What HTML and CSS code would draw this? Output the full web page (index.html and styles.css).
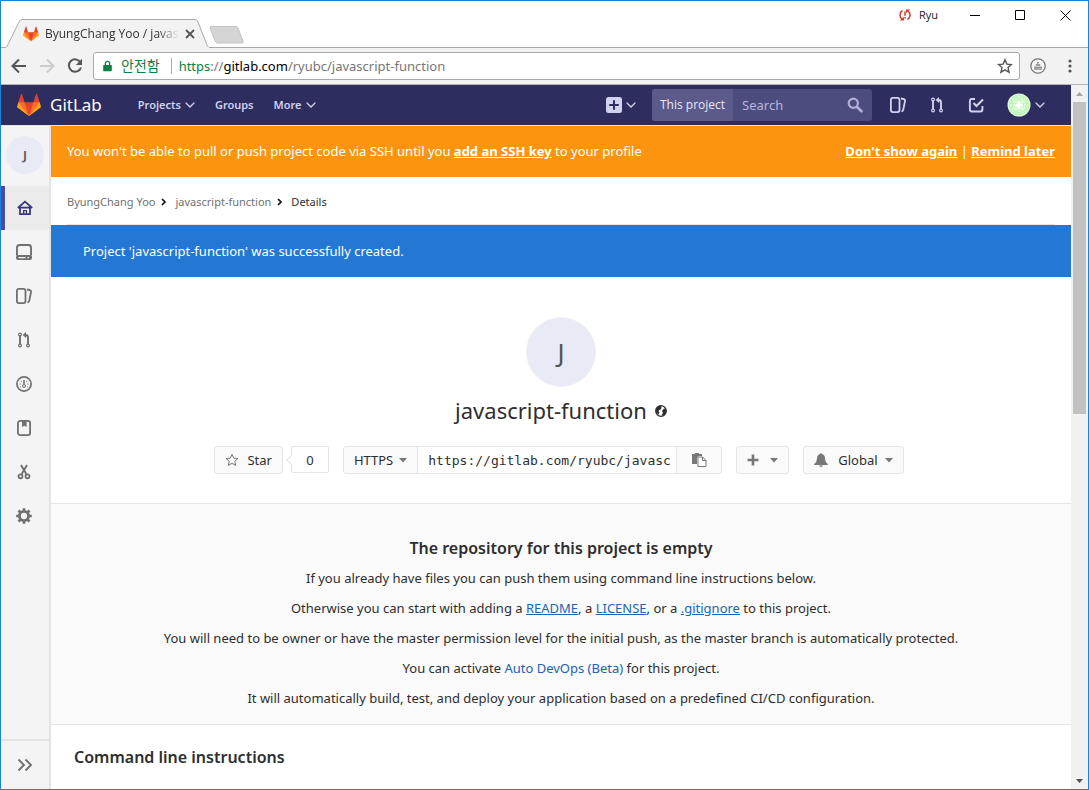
FILE: index.html
```html
<!DOCTYPE html>
<html lang="en">
<head>
<meta charset="utf-8">
<title>ByungChang Yoo / javascript-function</title>
<link rel="stylesheet" href="styles.css">
</head>
<body>
<svg class="defs" aria-hidden="true">
  <symbol id="fox" viewBox="0 0 36 36">
    <path fill="#e24329" d="M2 14l9.38 9v-9l-4-12.28c-.205-.632-1.176-.632-1.38 0z"/>
    <path fill="#e24329" d="M34 14l-9.38 9v-9l4-12.28c.205-.632 1.176-.632 1.38 0z"/>
    <path fill="#e24329" d="M18 34.38L3 14h30z"/>
    <path fill="#fc6d26" d="M18 34.38L11.38 14H2l4 11z"/>
    <path fill="#fc6d26" d="M18 34.38L24.62 14H34l-4 11z"/>
    <path fill="#fca326" d="M2 14L.1 20.16c-.18.565 0 1.2.5 1.56L18 34.38z"/>
    <path fill="#fca326" d="M34 14l1.9 6.16c.18.565 0 1.2-.5 1.56L18 34.38z"/>
  </symbol>
  <symbol id="chevron" viewBox="0 0 10 10"><path d="M1 3l4 4 4-4" fill="none" stroke="currentColor" stroke-width="1.3" stroke-linecap="round"/></symbol>
  <symbol id="caret" viewBox="0 0 8 5"><path d="M0 0h8L4 4.600z" fill="currentColor"/></symbol>
  <symbol id="issues" viewBox="0 0 16 16"><g fill="none" stroke="currentColor" stroke-width="1.8"><rect x=".9" y=".9" width="8.600" height="14.200" rx="2"/><path d="M11 1.500l2.600.5c1 .2 1.600 1 1.400 2l-1.700 8.700c-.2 1-.8 1.500-1.800 1.600"/></g></symbol>
  <symbol id="merge" viewBox="0 0 16 16"><g fill="none" stroke="currentColor"><g stroke-width="1.200"><circle cx="4" cy="2.500" r="1.400"/><circle cx="4" cy="13.500" r="1.400"/><circle cx="12" cy="13.500" r="1.400"/></g><path d="M4 4v8M12 12V5.500Q12 3 9.500 3H9" stroke-width="1.900"/></g><path d="M10 0v6L6.600 3z" fill="currentColor"/></symbol>
  <symbol id="next" viewBox="0 0 6 8"><path d="M1 1l3 3-3 3" fill="none" stroke="#111" stroke-width="1.700"/></symbol>
</svg>

<div class="window">
  <header class="titlebar">
    <div class="tab">
      <svg class="tab-shape" viewBox="0 0 208 29" preserveAspectRatio="none" aria-hidden="true"><path d="M0 28.500H5.500L18 3Q19.500.5 21 .5H194Q196 .5 197 3L206 26Q207 28.500 208 28.500" fill="#f2f2f2" stroke="#a9a9a9"/><path d="M5 28.500H208" stroke="#f2f2f2"/></svg>
      <svg class="tab-icon"><use href="#fox"/></svg>
      <span class="tab-title">ByungChang Yoo / javascript</span>
      <button class="plain tab-close" aria-label="Close tab"><svg viewBox="0 0 10 10"><path d="M1 1l8 8M9 1L1 9" stroke="#555" stroke-width="1.800"/></svg></button>
    </div>
    <button class="plain new-tab" aria-label="New tab"><svg viewBox="0 0 36 18"><path d="M2 .5H27Q28.500.5 29 2L34 15Q35 17 33 17H9Q7 17 6 15L1 2Q.5.500 2 .5z" fill="#d5d5d5" stroke="#c4c4c4"/></svg></button>
    <div class="window-tools">
      <svg class="sync" viewBox="0 0 12 12"><g fill="none" stroke="#d23f31" stroke-width="1.500"><path d="M3.500 1.500Q1 3 1 6q0 2.500 2 4M8.500 10.500q2.500-1.500 2.500-4.500 0-2.500-2-4"/><path d="M6 2.500v4.300M6 8v1.500"/></g><path d="M.8 11.500H5V7.800zM11.200.5H7v3.700z" fill="#d23f31"/></svg>
      <span class="user">Ryu</span>
      <button class="plain control" aria-label="Minimize"><svg viewBox="0 0 11 11"><path d="M0 5.500h10" stroke="#000"/></svg></button>
      <button class="plain control" aria-label="Maximize"><svg viewBox="0 0 11 11"><path d="M.5.5h9v9h-9z" fill="none" stroke="#000"/></svg></button>
      <button class="plain control" aria-label="Close"><svg viewBox="0 0 11 11"><path d="M.5.5l10 10M10.500.5l-10 10" stroke="#000"/></svg></button>
    </div>
  </header>

  <div class="toolbar">
    <button class="plain tool" aria-label="Back"><svg viewBox="0 0 16 16"><path d="M15 8H2M8 1.500L1.500 8 8 14.500" fill="none" stroke="#555" stroke-width="2"/></svg></button>
    <button class="plain tool" aria-label="Forward" disabled><svg viewBox="0 0 16 16"><path d="M1 8h13M8 1.500L14.500 8 8 14.500" fill="none" stroke="#ccc" stroke-width="2"/></svg></button>
    <button class="plain tool" aria-label="Reload"><svg viewBox="0 0 16 16"><path d="M13.500 4.500A6.200 6.200 0 1 0 14 9.500" fill="none" stroke="#555" stroke-width="2"/><path d="M15 .8V7H8.800z" fill="#555"/></svg></button>
    <div class="address">
      <svg class="lock" viewBox="0 0 10 12"><path d="M1 5h8q.8 0 .8.800V11q0 .8-.8.800H1q-.8 0-.8-.8V5.800Q.2 5 1 5z" fill="#0b8043"/><path d="M2.600 5.500V3.200a2.400 2.400 0 0 1 4.800 0v2.300" fill="none" stroke="#0b8043" stroke-width="1.400"/></svg>
      <span class="secure">안전함</span>
      <span class="url"><span class="scheme">https</span>://<b>gitlab.com</b>/ryubc/javascript-function</span>
      <button class="plain bookmark" aria-label="Bookmark"><svg viewBox="0 0 16 16"><path d="M8 1.800l1.900 4.300 4.600.4-3.500 3.100 1.100 4.600L8 11.800l-4.100 2.400L5 9.600 1.500 6.500l4.600-.4z" fill="none" stroke="#555" stroke-width="1.400"/></svg></button>
    </div>
    <button class="plain ext" aria-label="Extension"><svg viewBox="0 0 16 16"><circle cx="8" cy="8" r="7.200" fill="#f5f5f5" stroke="#777" stroke-width="1.300"/><path d="M4 8.500h8V12H4zM6 6h4v2H6zM7 4h1.500v2H7z" fill="#aaa"/><path d="M4 9.500h8M5.500 7h5M7 5l2-1" stroke="#888" stroke-width=".7"/></svg></button>
    <button class="plain menu" aria-label="Menu"><svg viewBox="0 0 4 14"><circle cx="2" cy="2" r="1.600"/><circle cx="2" cy="7" r="1.600"/><circle cx="2" cy="12" r="1.600"/></svg></button>
  </div>

  <div class="viewport">
    <div class="page">
      <nav class="navbar">
        <a class="brand" href="#"><svg><use href="#fox"/></svg>GitLab</a>
        <a class="nav-link" href="#">Projects <svg><use href="#chevron"/></svg></a>
        <a class="nav-link" href="#">Groups</a>
        <a class="nav-link" href="#">More <svg><use href="#chevron"/></svg></a>
        <button class="plain nav-new" aria-label="New"><svg viewBox="0 0 16 16"><rect width="16" height="16" rx="2.500" fill="#d1d1f0"/><path d="M8 3.200v9.600M3.200 8h9.600" stroke="#2e2d5f" stroke-width="2"/></svg><svg class="chev"><use href="#chevron"/></svg></button>
        <form class="search">
          <label for="search">This project</label>
          <input id="search" type="text" placeholder="Search">
          <svg viewBox="0 0 16 16"><circle cx="6.300" cy="6.300" r="4.600" fill="none" stroke="#afafd8" stroke-width="2.200"/><path d="M10 10l4.500 4.300" stroke="#afafd8" stroke-width="2.600" stroke-linecap="round"/></svg>
        </form>
        <div class="nav-icons">
          <a href="#" aria-label="Issues"><svg><use href="#issues"/></svg></a>
          <a href="#" aria-label="Merge requests"><svg><use href="#merge"/></svg></a>
          <a href="#" aria-label="Todos"><svg viewBox="0 0 16 16"><path d="M7 2H3.500Q1.900 2 1.900 4v8.500q0 2 2 2h8.500q2 0 2-2V9" fill="none" stroke="currentColor" stroke-width="1.900"/><path d="M5.500 6l3 3L15 2.500" fill="none" stroke="currentColor" stroke-width="2.100"/></svg></a>
        </div>
        <button class="plain nav-user" aria-label="User menu"><svg class="face" viewBox="0 0 24 24"><circle cx="12" cy="12" r="11.500" fill="#e4fbe0"/><circle cx="12" cy="12" r="10.500" fill="#c4f5bd"/><path d="M12 3v18M3 12h18M5.500 5.500l13 13M18.500 5.500l-13 13M6 9h12M6 15h12M9 5v14M15 5v14" stroke="#eafde6" stroke-width="1.300" stroke-dasharray="2 1.500"/><path d="M12 8.500v7M8.500 12h7" stroke="#fff" stroke-width="2"/></svg><svg class="chev"><use href="#chevron"/></svg></button>
      </nav>

      <div class="body">
        <aside class="sidebar">
          <a class="side-avatar" href="#">J</a>
          <a class="side active" href="#" aria-label="Overview"><svg viewBox="0 0 16 16"><g fill="none" stroke="currentColor"><path d="M.8 8L8 1.600 15.200 8M3 7.600v6.600h10V7.600M2 7.700h12" stroke-width="1.800"/><path d="M6.600 14v-3.400h2.800V14" stroke-width="1.300"/></g></svg></a>
          <a class="side" href="#" aria-label="Repository"><svg viewBox="0 0 16 16"><path d="M1 11.500V3.500Q1 1 3.500 1h9Q15 1 15 3.500v8" fill="none" stroke="currentColor" stroke-width="1.900"/><path fill-rule="evenodd" d="M2 11h12q2 0 2 2v1q0 2-2 2H2q-2 0-2-2v-1q0-2 2-2zm.5 2v1.200h7V13zm9 0v1.200H13V13z" fill="currentColor"/></svg></a>
          <a class="side" href="#" aria-label="Issues"><svg><use href="#issues"/></svg></a>
          <a class="side" href="#" aria-label="Merge requests"><svg><use href="#merge"/></svg></a>
          <a class="side" href="#" aria-label="CI / CD"><svg viewBox="0 0 16 16"><g fill="none" stroke="currentColor"><circle cx="8" cy="8" r="7.100" stroke-width="1.700"/><circle cx="8" cy="10" r="1.500"/><path d="M8 4v4.500" stroke-width="1.600"/><path d="M3.500 8h1.300M11.200 8h1.300M4.900 4.900l.8.800M11.100 4.900l-.8.800M4.200 11l.9-.5M11.800 11l-.9-.5"/></g></svg></a>
          <a class="side" href="#" aria-label="Wiki"><svg viewBox="0 0 16 16"><rect x="1.900" y=".9" width="12.200" height="14.200" rx="2.400" fill="none" stroke="currentColor" stroke-width="1.800"/><path d="M6 1h4.600v6L8.300 5.800 6 7z" fill="currentColor"/></svg></a>
          <a class="side" href="#" aria-label="Snippets"><svg viewBox="0 0 16 16"><g fill="none" stroke="currentColor"><path d="M5 1l5.300 9M11 1L5.700 10" stroke-width="1.900"/><circle cx="4.500" cy="12.300" r="2" stroke-width="1.700"/><circle cx="11.500" cy="12.300" r="2" stroke-width="1.700"/></g></svg></a>
          <a class="side" href="#" aria-label="Settings"><svg viewBox="0 0 16 16"><circle cx="8" cy="8" r="4.600" fill="none" stroke="currentColor" stroke-width="2.900"/><path d="M8 .2v3M8 12.800v3M.2 8h3M12.800 8h3M2.500 2.500l2 2M11.500 11.500l2 2M2.500 13.500l2-2M11.500 4.500l2-2" stroke="currentColor" stroke-width="2.600"/></svg></a>
          <button class="plain expand" aria-label="Expand sidebar"><svg viewBox="0 0 16 16"><path d="M1.500 2.500L7 8l-5.500 5.500M8.500 2.500L14 8l-5.500 5.500" fill="none" stroke="currentColor" stroke-width="1.900"/></svg></button>
        </aside>

        <main class="content">
          <div class="ssh-alert">
            <span>You won't be able to pull or push project code via SSH until you <a href="#">add an SSH key</a> to your profile</span>
            <span><a href="#">Don't show again</a> | <a href="#">Remind later</a></span>
          </div>
          <div class="crumbs">
            <a href="#">ByungChang Yoo</a><svg><use href="#next"/></svg><a href="#">javascript-function</a><svg><use href="#next"/></svg><span>Details</span>
          </div>
          <div class="flash">Project 'javascript-function' was successfully created.</div>

          <section class="project">
            <div class="avatar">J</div>
            <h1>javascript-function <svg viewBox="0 0 12 12"><circle cx="6" cy="6" r="5.300" fill="#fff" stroke="#2e2e2e" stroke-width="1.200"/><path d="M.7 4Q2 1 5.500.8L7 1.800 5.800 3 6.500 4 4.500 5 3.500 6 4.500 7.500 3.500 9.500Q.5 8 .7 4zM7 6l2-2.500L11 4q1 4-2.500 6.500L6.500 10 8 8z" fill="#2e2e2e"/></svg></h1>
            <div class="actions">
              <div class="group">
                <button class="btn star"><svg viewBox="0 0 14 14"><path d="M7 1.200l1.700 3.900 4.300.4-3.200 2.800.9 4.200L7 10.300l-3.700 2.200.9-4.200L1 5.500l4.300-.4z" fill="none" stroke="#777"/></svg>Star</button>
                <a class="count" href="#">0</a>
              </div>
              <div class="group clone">
                <button class="btn proto">HTTPS <svg class="caret"><use href="#caret"/></svg></button>
                <input class="clone-url" type="text" readonly aria-label="Project clone URL" value="https://gitlab.com/ryubc/javascript-function.git">
                <button class="btn copy" aria-label="Copy URL"><svg viewBox="0 0 15 14"><path d="M0 1h3V0h4v1h3v2H6.500L5 4.500V11H0z" fill="#777"/><path d="M6 4h4.500l3.500 3.500v6H6zM10.500 4v3.500H14" fill="#fff" stroke="#777"/></svg></button>
              </div>
              <button class="btn add" aria-label="Create new"><svg class="plus" viewBox="0 0 12 12"><path d="M6 .5v11M.5 6h11" stroke="#777" stroke-width="2.600"/></svg><svg class="caret"><use href="#caret"/></svg></button>
              <button class="btn notify"><svg class="bell" viewBox="0 0 14 14"><path d="M6.200 1q0-1 .8-1t.8 1Q11 1.800 11 5.500q0 3.500 2.800 5.500v1H.2v-1Q3 9 3 5.500 3 1.800 6.200 1zM5.200 12.500h3.600Q8.500 14 7 14t-1.800-1.500z" fill="#777"/></svg>Global <svg class="caret"><use href="#caret"/></svg></button>
            </div>
          </section>

          <section class="empty">
            <h2>The repository for this project is empty</h2>
            <p>If you already have files you can push them using command line instructions below.</p>
            <p>Otherwise you can start with adding a <a class="u" href="#">README</a>, a <a class="u" href="#">LICENSE</a>, or a <a class="u" href="#">.gitignore</a> to this project.</p>
            <p>You will need to be owner or have the master permission level for the initial push, as the master branch is automatically protected.</p>
            <p>You can activate <a href="#">Auto DevOps (Beta)</a> for this project.</p>
            <p>It will automatically build, test, and deploy your application based on a predefined CI/CD configuration.</p>
          </section>
          <h2 class="instructions">Command line instructions</h2>
        </main>
      </div>
    </div>

    <div class="scrollbar">
      <button class="plain" aria-label="Scroll up"><svg viewBox="0 0 7 4"><path d="M0 4l3.500-4L7 4z" fill="#a3a3a3"/></svg></button>
      <div class="thumb"></div>
      <button class="plain" aria-label="Scroll down"><svg viewBox="0 0 7 4"><path d="M0 0l3.500 4L7 0z" fill="#505050"/></svg></button>
    </div>
  </div>
</div>
</body>
</html>
```
FILE: styles.css
```css
* { box-sizing: border-box; }
body { margin: 0; font: 13px/20px "Noto Sans", "Open Sans", "Noto Sans CJK KR", sans-serif; color: #2e2e2e; background: #fff; }
a { color: inherit; text-decoration: none; }
svg { display: block; flex: none; }
.defs { position: absolute; width: 0; height: 0; }
button, input { font: inherit; color: inherit; }
.plain { display: flex; align-items: center; justify-content: center; padding: 0; border: 0; background: none; }

.window { display: flex; flex-direction: column; min-height: 100vh; border: 1px solid #1883d7; }

/* Browser frame */
.titlebar { display: flex; align-items: flex-end; height: 47px; border-bottom: 1px solid #a9a9a9; font-family: "Open Sans", sans-serif; }
.tab { position: relative; display: flex; align-items: center; width: 208px; height: 29px; margin-bottom: -1px; padding-left: 22px; font-size: 12px; color: #333; }
.tab-shape { position: absolute; inset: 0; width: 100%; height: 100%; }
.tab-icon { position: relative; width: 16px; height: 16px; }
.tab-title { position: relative; width: 134px; margin: 0 6px; overflow: hidden; white-space: nowrap; mask-image: linear-gradient(to right, #000 84%, transparent); }
.tab-close { position: relative; }
.tab-close svg { width: 10px; height: 10px; }
.new-tab { margin-bottom: 3px; }
.new-tab svg { width: 36px; height: 18px; }
.window-tools { display: flex; align-items: center; align-self: flex-start; height: 28px; margin-left: auto; padding-right: 17px; }
.sync { width: 12px; height: 12px; margin-right: 8px; }
.user { font-size: 11px; color: #222; margin-right: 32px; }
.control + .control { margin-left: 34px; }
.control svg { width: 11px; height: 11px; }

.toolbar { display: flex; align-items: center; height: 37px; padding: 0 16px 0 10px; background: #f2f2f2; border-bottom: 1px solid #b6b4b6; }
.tool { margin-right: 12px; }
.tool svg, .ext svg { width: 16px; height: 16px; }
.address { display: flex; flex: 1; align-items: center; height: 28px; margin-left: -2px; padding: 0 6px 0 9px; border: 1px solid #a9a9a9; border-radius: 3px; background: #fff; font-size: 14px; }
.lock { width: 9px; height: 12px; }
.secure { margin-left: 9px; padding-right: 11px; border-right: 1px solid #aaa; line-height: 16px; color: #0b8043; }
.url { margin-left: 7px; font-size: 13px; color: #777; }
.url b { font-weight: 400; color: #000; }
.scheme { color: #0b8043; }
.bookmark { margin-left: auto; }
.bookmark svg { width: 16px; height: 16px; }
.ext { margin: 0 22px 0 10px; }
.menu svg { width: 4px; height: 14px; fill: #555; }

.viewport { display: flex; flex: 1; }
.page { display: flex; flex: 1; flex-direction: column; min-width: 0; }
.scrollbar { display: flex; flex-direction: column; width: 17px; padding: 0 2px; background: #f1f1f1; }
.scrollbar button { height: 17px; }
.scrollbar svg { width: 7px; height: 4px; }
.scrollbar .thumb { height: 312px; margin-bottom: auto; background: #c1c1c1; }

/* GitLab navigation */
.navbar { display: flex; align-items: center; height: 40px; padding: 0 26px 0 16px; background: #2e2d5f; color: #d1d1f0; font-size: 11px; font-weight: 600; }
.brand { display: flex; align-items: center; gap: 9px; margin-right: 36px; color: #fff; font-size: 17px; font-weight: 400; }
.brand svg { width: 24px; height: 24px; }
.nav-link { display: flex; align-items: center; gap: 4px; margin-right: 20px; }
.nav-link svg, .chev { width: 10px; height: 10px; }
.nav-new { gap: 4px; margin: 0 16px 0 auto; color: inherit; }
.nav-new svg:first-child { width: 16px; height: 16px; }
.search { display: flex; align-items: center; width: 220px; height: 32px; padding-right: 9px; border-radius: 3px; background: #4d4c7e; overflow: hidden; }
.search label { padding: 6px 8px; background: #5b5a8a; color: #e8e8fa; font: 400 12px/20px "Open Sans", sans-serif; }
.search input { flex: 1; min-width: 0; padding: 0 9px; border: 0; outline: 0; background: none; font-size: 13px; font-weight: 400; }
.search input::placeholder { color: #b6b5db; opacity: 1; }
.search svg { width: 16px; height: 16px; }
.nav-icons { display: flex; gap: 23px; margin: 0 23px 0 18px; }
.nav-icons svg { width: 16px; height: 16px; }
.nav-user { gap: 4px; color: inherit; }
.nav-user .face { width: 24px; height: 24px; }

.body { display: flex; flex: 1; border-top: 1px solid #e5e5e5; }
.sidebar { display: flex; flex-direction: column; align-items: stretch; width: 50px; border-right: 2px solid #e3e3e3; background: #f4f4f4; color: #707070; }
.side-avatar { width: 38px; height: 38px; margin: 10px 0 12px 5px; border-radius: 50%; background: #e8eaf6; color: #555; font-weight: 600; line-height: 38px; text-align: center; }
.side { display: flex; align-items: center; height: 44px; padding-left: 15px; }
.side svg, .expand svg { width: 16px; height: 16px; }
.active { padding-left: 12px; border-left: 4px solid #4b4ba3; background: #ebebeb; color: #393982; }
.expand { height: 50px; margin-top: auto; border-top: 2px solid #e3e3e3; color: inherit; }

/* Main column */
.content { flex: 1; min-width: 0; }
.ssh-alert { display: flex; justify-content: space-between; padding: 15px 16px 16px; background: #fc9410; color: #fff; }
.ssh-alert a { font-weight: 700; text-decoration: underline; }
.crumbs { display: flex; align-items: center; gap: 6px; height: 48px; margin: 0 16px; padding-top: 2px; border-bottom: 1px solid #e5e5e5; font-size: 11px; color: #707070; }
.crumbs svg { width: 6px; height: 8px; margin-right: 2px; }
.crumbs span { color: #2e2e2e; }
.flash { padding: 16px 32px; background: #2478d3; color: #fff; }
.project { display: flex; flex-direction: column; align-items: center; padding: 40px 16px 29px; }
.avatar { width: 70px; height: 70px; border: 1px solid #f2f2f2; border-radius: 50%; background: #e8eaf6; color: #555; font-size: 26px; line-height: 68px; text-align: center; }
h1 { display: flex; align-items: center; gap: 8px; margin: 8px 0 21px; font-size: 22px; line-height: 30px; font-weight: 400; }
h1 svg { width: 12px; height: 12px; margin-top: 2px; }
.actions { display: flex; gap: 14px; padding-right: 4px; }
.group { display: flex; }
.btn { display: flex; align-items: center; height: 28px; padding: 0 10px; border: 1px solid #e5e5e5; border-radius: 3px; background: #fafafa; }
.caret { width: 8px; height: 5px; color: #777; }
.star { gap: 8px; }
.star svg, .bell { width: 14px; height: 14px; }
.count { position: relative; width: 38px; height: 27px; margin-left: 8px; border: 1px solid #e5e5e5; border-radius: 2px; line-height: 26px; text-align: center; }
.count::before { content: ""; position: absolute; top: 9px; left: -4px; width: 7px; height: 7px; border: solid #e5e5e5; border-width: 0 0 1px 1px; background: #fff; transform: rotate(45deg); }
.proto { gap: 6px; border-radius: 3px 0 0 3px; }
.clone-url { width: 260px; height: 28px; padding: 0 6px 0 10px; margin: 0 -1px; border: 1px solid #e5e5e5; font: 13px "DejaVu Sans Mono", monospace; outline: 0; }
.copy { width: 46px; justify-content: center; border-radius: 0 3px 3px 0; }
.copy svg { width: 15px; height: 14px; }
.add { gap: 11px; }
.plus { width: 12px; height: 12px; }
.notify { gap: 7px; }
.bell { margin-right: 3px; }

.empty { padding: 34px 16px 6px; border: solid #e5e5e5; border-width: 1px 0; background: #fafafa; text-align: center; }
h2 { margin: 0 0 10px; font-size: 16px; line-height: 20px; font-weight: 600; }
p { margin: 0 0 10px; }
p a { color: #2262b4; }
.u { text-decoration: underline; }
.instructions { margin: 0; padding: 22px 23px; }
```
